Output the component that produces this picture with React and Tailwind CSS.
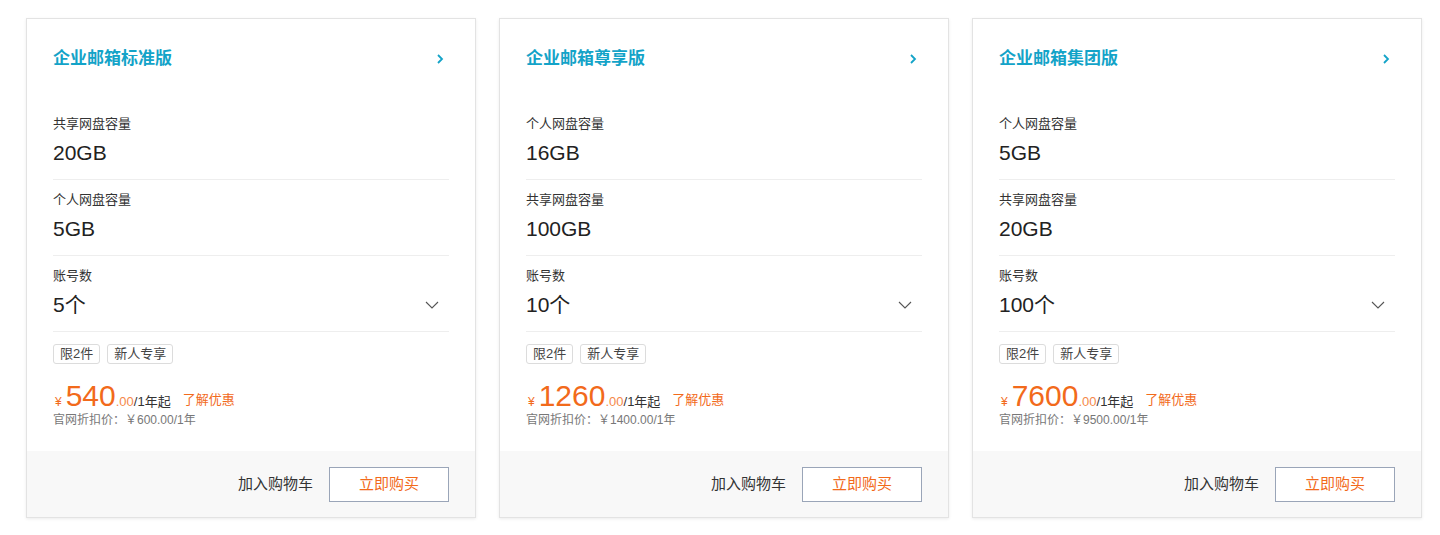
import React from 'react';

/* ── Data ─────────────────────────────────────────────── */
const PLANS = [
  {
    name: '企业邮箱标准版',
    specs: [
      { label: '共享网盘容量', value: '20GB' },
      { label: '个人网盘容量', value: '5GB' },
    ],
    accounts: '5个',
    price: '540',
    origin: '￥600.00/1年',
  },
  {
    name: '企业邮箱尊享版',
    specs: [
      { label: '个人网盘容量', value: '16GB' },
      { label: '共享网盘容量', value: '100GB' },
    ],
    accounts: '10个',
    price: '1260',
    origin: '￥1400.00/1年',
  },
  {
    name: '企业邮箱集团版',
    specs: [
      { label: '个人网盘容量', value: '5GB' },
      { label: '共享网盘容量', value: '20GB' },
    ],
    accounts: '100个',
    price: '7600',
    origin: '￥9500.00/1年',
  },
];

const FONT = { fontFamily: '"Liberation Sans", "Noto Sans CJK SC", sans-serif' };

/* ── Pieces ───────────────────────────────────────────── */
function Spec({ label, value, children }) {
  return (
    <div className="pt-[11px] pb-[12px] border-b border-[#eeeeee]">
      <div className="text-[13px] leading-[18px] text-[#333]">{label}</div>
      <div className="mt-[6px] flex items-center justify-between">
        <span className="text-[21px] leading-[28px] text-[#222]">{value}</span>
        {children}
      </div>
    </div>
  );
}

function PlanCard({ plan }) {
  return (
    <div className="w-[450px] bg-white border border-[#e3e3e3] shadow-[0_1px_3px_rgba(0,0,0,0.08)] flex flex-col">
      <div className="px-[26px] pt-[28px] pb-[22px]">
        {/* Header */}
        <div className="flex items-center justify-between h-[24px]">
          <span className="text-[17px] font-bold text-[#13a3c8] leading-[24px]">{plan.name}</span>
          <svg width="8" height="12" viewBox="0 0 8 12" className="mr-[5px]">
            <path d="M2 2l4 4-4 4" fill="none" stroke="#13a3c8" strokeWidth="1.8" />
          </svg>
        </div>

        {/* Specs */}
        <div className="mt-[33px]">
          {plan.specs.map((s) => (
            <Spec key={s.label} label={s.label} value={s.value} />
          ))}
          <Spec label="账号数" value={plan.accounts}>
            <svg width="14" height="8" viewBox="0 0 14 8" className="mr-[10px]">
              <path d="M1 1l6 6 6-6" fill="none" stroke="#555" strokeWidth="1.1" />
            </svg>
          </Spec>
        </div>

        {/* Tags */}
        <div className="mt-[12px] flex gap-[7px]">
          {['限2件', '新人专享'].map((t) => (
            <span
              key={t}
              className="h-[20px] px-[6px] border border-[#dcdcdc] rounded-[3px] text-[13px] leading-[18px] text-[#444]"
            >
              {t}
            </span>
          ))}
        </div>

        {/* Price */}
        <div className="mt-[17px] flex items-baseline leading-none">
          <span className="text-[12px] text-[#f26a1b] ml-[2px] mr-[4px]">¥</span>
          <span className="text-[30px] text-[#f26a1b]">{plan.price}</span>
          <span className="text-[13px] text-[#f5894a]">.00</span>
          <span className="text-[13px] text-[#333]">/1年起</span>
          <span className="text-[13px] text-[#f26a1b] ml-[12px] relative -top-[2px]">了解优惠</span>
        </div>
        <div className="text-[12px] leading-[18px] text-[#777]">官网折扣价：{plan.origin}</div>
      </div>

      {/* Footer */}
      <div className="h-[66px] bg-[#f8f8f8] flex items-center justify-end pr-[26px] gap-[16px]">
        <span className="text-[15px] text-[#333]">加入购物车</span>
        <button className="w-[120px] h-[35px] border border-[#9aa5b8] bg-white text-[15px] text-[#f26a1b]">
          立即购买
        </button>
      </div>
    </div>
  );
}

/* ── Page ─────────────────────────────────────────────── */
export default function App() {
  return (
    <div className="w-[1440px] h-[535px] bg-white pl-[26px] pt-[18px]" style={FONT}>
      <div className="flex gap-[23px]">
        {PLANS.map((p) => (
          <PlanCard key={p.name} plan={p} />
        ))}
      </div>
    </div>
  );
}
